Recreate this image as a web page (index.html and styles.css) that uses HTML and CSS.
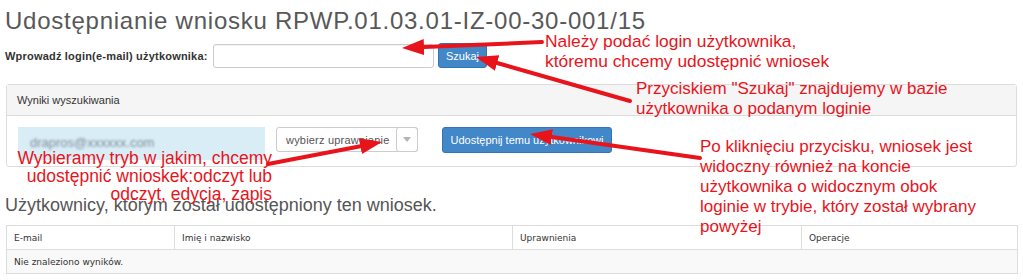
FILE: index.html
```html
<!DOCTYPE html>
<html lang="pl">
<head>
    <meta charset="UTF-8">
    <meta name="viewport" content="width=device-width, initial-scale=1.0">
    <title>Udostępnianie wniosku</title>
    <link rel="stylesheet" href="styles.css">
</head>
<body>
    <div class="page">
        <h1 class="title">Udostępnianie wniosku RPWP.01.03.01-IZ-00-30-001/15</h1>

        <form class="search">
            <label for="login">Wprowadź login(e-mail) użytkownika:</label>
            <input id="login" type="text">
            <button type="button" class="btn btn-search">Szukaj</button>
        </form>

        <div class="panel">
            <div class="panel-heading">Wyniki wyszukiwania</div>
            <div class="panel-body">
                <div class="found"><span class="blurred">drapros@xxxxxx.com</span></div>
                <div class="select">
                    <span class="select-text">wybierz uprawnienie</span>
                    <span class="caret-box"><span class="caret"></span></span>
                </div>
                <button type="button" class="btn btn-share">Udostępnij temu użytkownikowi</button>
            </div>
        </div>

        <h2 class="section-title">Użytkownicy, którym został udostępniony ten wniosek.</h2>

        <table class="grid">
            <thead>
                <tr>
                    <th class="col-email">E-mail</th>
                    <th class="col-name">Imię i nazwisko</th>
                    <th class="col-rights">Uprawnienia</th>
                    <th>Operacje</th>
                </tr>
            </thead>
            <tbody>
                <tr>
                    <td colspan="4">Nie znaleziono wyników.</td>
                </tr>
            </tbody>
        </table>
    </div>

    <!-- annotations drawn over the screenshot -->
    <div class="notes">
        <svg class="arrows" width="1023" height="280" viewBox="0 0 1023 280">
            <defs>
                <marker id="head" viewBox="0 0 10 10" refX="0" refY="5" markerUnits="userSpaceOnUse" markerWidth="22" markerHeight="16" orient="auto" preserveAspectRatio="none">
                    <path d="M0,0 L10,5 L0,10 z" fill="#e8141c"/>
                </marker>
            </defs>
            <line x1="542" y1="42" x2="424" y2="47.1" marker-end="url(#head)"/>
            <line x1="630" y1="101" x2="497.1" y2="63" marker-end="url(#head)"/>
            <line x1="268" y1="164" x2="360.4" y2="146.2" marker-end="url(#head)"/>
            <line x1="700" y1="158" x2="551.8" y2="137.1" marker-end="url(#head)"/>
        </svg>
        <p class="note note-login">Należy podać login użytkownika,<br>któremu chcemy udostępnić wniosek</p>
        <p class="note note-search">Przyciskiem "Szukaj" znajdujemy w bazie<br>użytkownika o podanym loginie</p>
        <p class="note note-share">Po kliknięciu przycisku, wniosek jest<br>widoczny również na koncie<br>użytkownika o widocznym obok<br>loginie w trybie, który został wybrany<br>powyżej</p>
        <p class="note note-mode">Wybieramy tryb w jakim, chcemy<br>udostępnić wnioskek:odczyt lub<br>odczyt, edycja, zapis</p>
    </div>
</body>
</html>
```

FILE: styles.css
```css
body {
    margin: 0;
    padding: 0;
    background: #fff;
    font-family: 'Liberation Sans', Arial, Helvetica, sans-serif;
    color: #333;
    position: relative;
    width: 1023px;
    height: 280px;
    overflow: hidden;
}

.page {
    padding: 0 6px 0 5px;
}

.title {
    margin: 0;
    padding-top: 6px;
    font-size: 24px;
    line-height: 30px;
    font-weight: normal;
    letter-spacing: 0.75px;
    color: #585858;
    white-space: nowrap;
}

.search {
    display: flex;
    align-items: center;
    margin: 7px 0 0;
    height: 25px;
}

.search label {
    flex: 0 0 208px;
    font-size: 11px;
    font-weight: bold;
    letter-spacing: 0.2px;
    color: #333;
    white-space: nowrap;
}

.search input {
    box-sizing: border-box;
    width: 221px;
    height: 24px;
    border: 1px solid #ccc;
    border-radius: 3px;
    box-shadow: inset 0 1px 1px rgba(0, 0, 0, 0.06);
    margin: 0;
}

.btn {
    box-sizing: border-box;
    height: 25px;
    padding: 0 10px;
    border: 1px solid #3574b0;
    border-radius: 3px;
    background: #4287c7;
    color: #fff;
    font-family: 'Liberation Sans', Arial, sans-serif;
    font-size: 11px;
    cursor: pointer;
}

.btn-search {
    margin-left: 4px;
    width: 49px;
    padding: 0;
}

.panel {
    margin: 16px 0 0 1px;
    border: 1px solid #ddd;
    border-radius: 3px;
}

.panel-heading {
    height: 30px;
    line-height: 30px;
    padding-left: 10px;
    background: #f5f5f5;
    border-bottom: 1px solid #ddd;
    font-size: 11px;
    color: #333;
}

.panel-body {
    display: flex;
    align-items: flex-start;
    height: 39px;
    padding: 11px 11px 0;
}

.found {
    box-sizing: border-box;
    width: 247px;
    height: 33px;
    padding: 6px 12px 0;
    background: #d9edf7;
}

.blurred {
    font-size: 13px;
    color: #7f8e99;
    filter: blur(1.3px);
}

.select {
    box-sizing: border-box;
    display: flex;
    align-items: center;
    justify-content: space-between;
    width: 142px;
    height: 25px;
    margin-left: 11px;
    border: 1px solid #ccc;
    border-radius: 3px;
    font-size: 11px;
    letter-spacing: 0.2px;
    color: #555;
}

.select-text {
    padding-left: 9px;
    white-space: nowrap;
}

.caret-box {
    box-sizing: border-box;
    display: flex;
    align-items: center;
    justify-content: center;
    width: 22px;
    height: 25px;
    margin: -1px -1px -1px 0;
    border: 1px solid #ccc;
    border-radius: 3px;
}

.caret {
    width: 0;
    height: 0;
    border-left: 4px solid transparent;
    border-right: 4px solid transparent;
    border-top: 5px solid #b5b5b5;
}

.btn-share {
    margin-left: 24px;
    width: 170px;
    height: 26px;
    padding: 0;
}

.section-title {
    margin: 27px 0 0;
    font-size: 18px;
    line-height: 22px;
    font-weight: normal;
    color: #555;
    white-space: nowrap;
}

.grid {
    margin: 9px 0 0 1px;
    width: 1012px;
    border-collapse: collapse;
    table-layout: fixed;
    font-family: 'DejaVu Sans', Verdana, sans-serif;
    font-size: 9px;
    color: #333;
}

.grid th,
.grid td {
    height: 23px;
    padding: 0 7px;
    border: 1px solid #ddd;
    text-align: left;
    font-weight: normal;
    white-space: nowrap;
}

.grid tbody td {
    background: #f9f9f9;
}

.col-email { width: 153px; }
.col-name { width: 323px; }
.col-rights { width: 274px; }

.notes {
    position: absolute;
    top: 0;
    left: 0;
    width: 1023px;
    height: 280px;
    pointer-events: none;
}

.arrows {
    position: absolute;
    top: 0;
    left: 0;
}

.arrows line {
    stroke: #e8141c;
    stroke-width: 4;
    stroke-linecap: round;
}

.note {
    position: absolute;
    margin: 0;
    font-size: 17px;
    line-height: 20px;
    color: #e8141c;
    white-space: nowrap;
}

.note-login { left: 545px; top: 31px; font-size: 17.4px; }
.note-search { left: 636px; top: 79px; }
.note-share { left: 700px; top: 137px; }

.note-mode {
    left: 0;
    top: 149px;
    width: 272px;
    font-size: 17.5px;
    line-height: 18px;
    text-align: right;
}
```
